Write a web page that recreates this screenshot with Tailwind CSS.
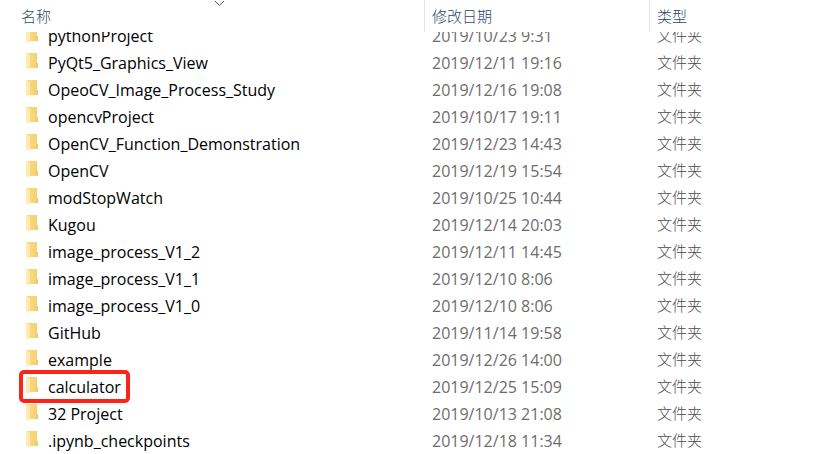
<!DOCTYPE html>
<html lang="zh-CN">
<head>
<meta charset="utf-8">
<meta name="viewport" content="width=device-width, initial-scale=1">
<title>文件夹</title>
<script src="https://cdn.jsdelivr.net/npm/@tailwindcss/browser@4"></script>
</head>
<body class="h-screen overflow-hidden bg-white font-['Open_Sans','Noto_Sans_CJK_SC',sans-serif] text-[15px] leading-[27px] text-[#6d6d6d]">
<svg class="absolute h-0 w-0" aria-hidden="true">
  <linearGradient id="back" x2="1"><stop stop-color="#fbdc82"/><stop offset="1" stop-color="#f3cf70"/></linearGradient>
  <symbol id="folder" viewBox="0 0 13 17">
    <path d="M1 0H11V10H12V15H1Z" fill="url(#back)"/>
    <path d="M10 10H12V15H10Z" fill="#eccb78"/>
    <path d="M0 0H1L4 2.500V14L3 17L0 15Z" fill="#ffeab0"/>
  </symbol>
</svg>
<table class="block w-full">
  <thead class="relative z-10 block bg-white text-[#2f4766]">
    <tr class="grid h-8 grid-cols-[425px_225px_1fr] text-left">
      <th class="relative border-r border-[#e5e5e5] pt-[3px] pl-[21px] font-light" aria-sort="descending">名称
        <svg class="absolute top-0 left-[214px] h-[7px] w-[11px]" viewBox="0 0 11 7" fill="none" stroke="#555" aria-hidden="true"><path d="M1 1L5.500 5.500L10 1"/></svg>
      </th>
      <th class="border-r border-[#e5e5e5] pt-[3px] pl-[7px] font-light">修改日期</th>
      <th class="pt-[3px] pl-[7px] font-light">类型</th>
    </tr>
  </thead>
  <tbody id="rows" class="-mt-[10px] block"></tbody>
</table>
<template id="row">
  <tr class="grid h-[27px] grid-cols-[425px_225px_1fr]">
    <td class="relative flex pl-[26px] text-base leading-[28px] text-black"><svg class="mt-1 mr-[9px] h-[17px] w-[13px]" aria-hidden="true"><use href="#folder"/></svg><span></span></td>
    <td class="pl-[7px] text-base leading-[28px]"></td>
    <td class="pl-[7px] font-light text-[#4a4a4a]">文件夹</td>
  </tr>
</template>
<template id="mark">
  <div class="absolute -top-[3px] left-[19px] h-[33px] w-[111px] rounded-[5px] border-4 border-[#fb2416]"></div>
</template>
<script>
const files = [
  ["pythonProject", "2019/10/23 9:31"],
  ["PyQt5_Graphics_View", "2019/12/11 19:16"],
  ["OpeoCV_Image_Process_Study", "2019/12/16 19:08"],
  ["opencvProject", "2019/10/17 19:11"],
  ["OpenCV_Function_Demonstration", "2019/12/23 14:43"],
  ["OpenCV", "2019/12/19 15:54"],
  ["modStopWatch", "2019/10/25 10:44"],
  ["Kugou", "2019/12/14 20:03"],
  ["image_process_V1_2", "2019/12/11 14:45"],
  ["image_process_V1_1", "2019/12/10 8:06"],
  ["image_process_V1_0", "2019/12/10 8:06"],
  ["GitHub", "2019/11/14 19:58"],
  ["example", "2019/12/26 14:00"],
  ["calculator", "2019/12/25 15:09", true],
  ["32 Project", "2019/10/13 21:08"],
  [".ipynb_checkpoints", "2019/12/18 11:34"]
];
const body = document.getElementById("rows");
for (const [name, date, marked] of files) {
  const row = document.getElementById("row").content.cloneNode(true);
  const cells = row.querySelectorAll("td");
  cells[0].querySelector("span").textContent = name;
  cells[1].textContent = date;
  if (marked) cells[0].append(document.getElementById("mark").content.cloneNode(true));
  body.append(row);
}
</script>
</body>
</html>
